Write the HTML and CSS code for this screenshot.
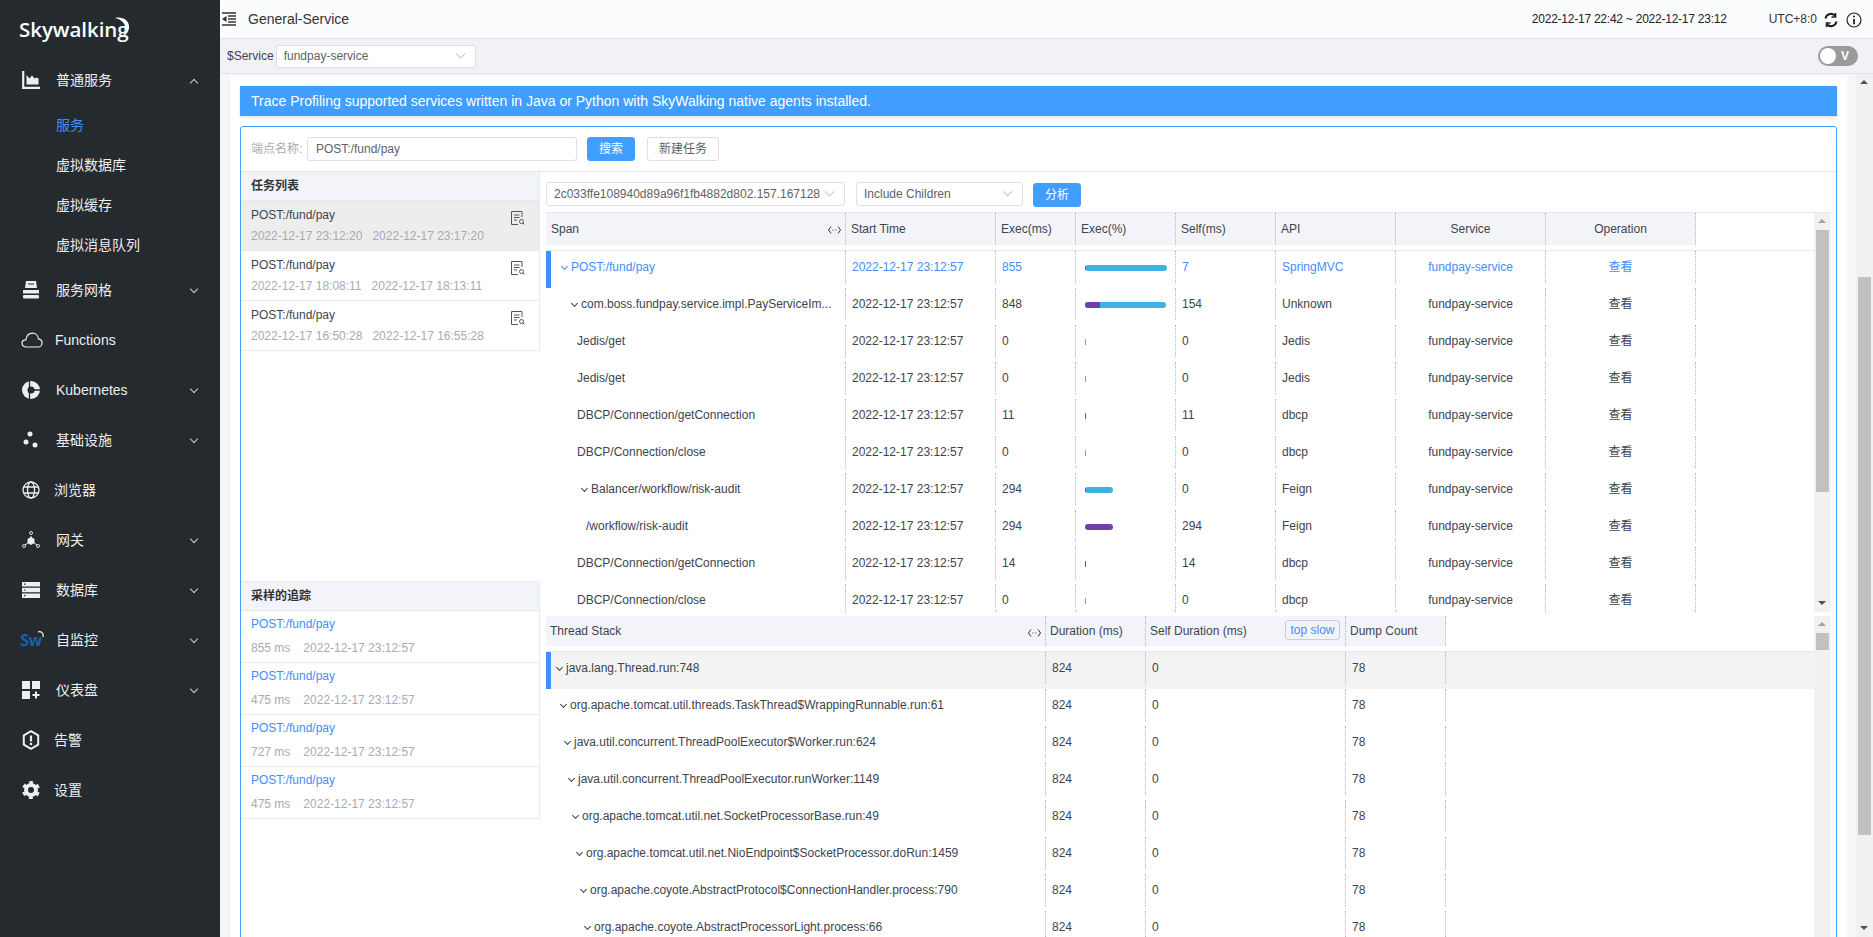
FILE: index.html
```html
<!DOCTYPE html>
<html lang="zh">
<head>
<meta charset="utf-8">
<title>General-Service</title>
<link rel="stylesheet" href="styles.css">
</head>
<body>
<div class="app">
  <aside class="side">
    <div class="logo">
      <span class="logo-text">Skywalking</span>
      <svg class="logo-moon" viewBox="0 0 18 20" width="18" height="20"><path d="M3 1c8-2 15 3 14 10-.5 4-3 7-6 8 2-3 3-6 2-10C12 5 8 2 3 1z" fill="#fff"/></svg>
    </div>
    <nav class="menu">
      <div class="mi">
        <span class="ic"><svg viewBox="0 0 18 18" width="18" height="18"><path d="M1.2 0v16.8H18" fill="none" stroke="#eee" stroke-width="2.2"/><path d="M4.5 13.5V4l3 3.500 2.500-3 2.500 3 2-1 2 1v6z" fill="#eee"/></svg></span>
        <span class="mt">普通服务</span><i class="arr up"></i>
      </div>
      <div class="sub active">服务</div>
      <div class="sub">虚拟数据库</div>
      <div class="sub">虚拟缓存</div>
      <div class="sub">虚拟消息队列</div>
      <div class="mi">
        <span class="ic"><svg viewBox="0 0 18 18" width="18" height="18"><path d="M4 0h10l1 7H3z" fill="#eee"/><path d="M6 3h6" stroke="#252a2f"/><rect x="1" y="9" width="16" height="3.500" fill="#eee"/><rect x="1" y="14" width="16" height="3.500" rx="1" fill="#eee"/></svg></span>
        <span class="mt">服务网格</span><i class="arr"></i>
      </div>
      <div class="mi">
        <span class="ic wide"><svg viewBox="0 0 22 16" width="22" height="16"><path d="M5.500 15C3 15 1 13.500 1 11.300 1 9.200 2.700 7.800 4.800 7.800 5.500 4 8 1.200 11.500 1.200c3.300 0 5.600 2.500 5.900 5.600 2 .3 3.600 2 3.600 4.100 0 2.300-1.800 4.100-4 4.100z" fill="none" stroke="#eee" stroke-width="1.200"/></svg></span>
        <span class="mt near">Functions</span>
      </div>
      <div class="mi">
        <span class="ic"><svg viewBox="0 0 18 18" width="18" height="18"><circle cx="9" cy="9" r="9" fill="#eee"/><path d="M7.500 0v18M9 9h9" stroke="#252a2f" stroke-width="1.300"/><circle cx="9" cy="9" r="3.500" fill="#252a2f"/></svg></span>
        <span class="mt">Kubernetes</span><i class="arr"></i>
      </div>
      <div class="mi">
        <span class="ic"><svg viewBox="0 0 18 18" width="18" height="18"><circle cx="8" cy="3" r="2.500" fill="#eee"/><circle cx="4" cy="11" r="2.500" fill="#eee"/><circle cx="13" cy="14" r="2.500" fill="#eee"/></svg></span>
        <span class="mt">基础设施</span><i class="arr"></i>
      </div>
      <div class="mi">
        <span class="ic"><svg viewBox="0 0 18 18" width="18" height="18" fill="none" stroke="#eee" stroke-width="1.300"><circle cx="9" cy="9" r="8"/><ellipse cx="9" cy="9" rx="3.500" ry="8"/><path d="M1.500 6h15M1.500 12h15"/></svg></span>
        <span class="mt near">浏览器</span>
      </div>
      <div class="mi">
        <span class="ic"><svg viewBox="0 0 20 18" width="20" height="18"><path d="M10 5v6M10 10l-6 4M10 10l6 4" stroke="#ddd"/><path d="M10 6l3.500 2v4L10 14l-3.500-2V8z" fill="#eee"/><circle cx="10" cy="2" r="1.500" fill="none" stroke="#ddd"/><circle cx="3" cy="15" r="1.500" fill="none" stroke="#ddd"/><circle cx="17" cy="15" r="1.500" fill="none" stroke="#ddd"/></svg></span>
        <span class="mt">网关</span><i class="arr"></i>
      </div>
      <div class="mi">
        <span class="ic"><svg viewBox="0 0 18 16" width="18" height="16"><path d="M0 0h18v4.500H0zM0 5.700h18v4.500H0zM0 11.400h18v4.500H0z" fill="#eee"/><path d="M2 2.200h1.500M2 8h1.500M2 13.600h1.500" stroke="#252a2f" stroke-width="1.200"/></svg></span>
        <span class="mt">数据库</span><i class="arr"></i>
      </div>
      <div class="mi">
        <span class="ic"><span class="sw">Sw</span><svg class="sw-arc" viewBox="0 0 6 6" width="6" height="6"><path d="M0 1c3-1 6 1 5 5" fill="none" stroke="#eee" stroke-width="1.300"/></svg></span>
        <span class="mt">自监控</span><i class="arr"></i>
      </div>
      <div class="mi">
        <span class="ic"><svg viewBox="0 0 18 18" width="18" height="18"><path d="M0 0h8v8H0zM10 0h8v8h-8zM0 10h8v8H0z" fill="#eee"/><path d="M14 10.500v7M10.500 14h7" stroke="#eee" stroke-width="2"/></svg></span>
        <span class="mt">仪表盘</span><i class="arr"></i>
      </div>
      <div class="mi">
        <span class="ic"><svg viewBox="0 0 18 20" width="18" height="20"><path d="M9 1.200l7.200 4.100v9.400L9 18.800l-7.200-4.100V5.300z" fill="none" stroke="#eee" stroke-width="2" stroke-linejoin="round"/><path d="M9 5.500v6" stroke="#eee" stroke-width="2.200"/><circle cx="9" cy="14" r="1.300" fill="#eee"/></svg></span>
        <span class="mt near">告警</span>
      </div>
      <div class="mi">
        <span class="ic"><svg viewBox="0 0 18 18" width="18" height="18" fill="none" stroke="#eee"><circle cx="9" cy="9" r="5" stroke-width="4"/><circle cx="9" cy="9" r="7.500" stroke-width="3" stroke-dasharray="3.800 4.050" stroke-dashoffset="1.900" transform="rotate(-90 9 9)"/></svg></span>
        <span class="mt near">设置</span>
      </div>
    </nav>
  </aside>

  <main class="main">
    <header class="top">
      <svg class="collapse" viewBox="0 0 14 14" width="14" height="14"><path d="M0 1h14M6 4h8M6 7h8M6 10h8M0 13h14" stroke="#333" stroke-width="1.500"/><path d="M4.500 4v6L0 7z" fill="#333"/></svg>
      <span class="page-name">General-Service</span>
      <span class="range">2022-12-17 22:42 ~ 2022-12-17 23:12</span>
      <span class="utc">UTC+8:0</span>
      <svg class="refresh" viewBox="0 0 16 16" width="16" height="16" fill="none" stroke="#222" stroke-width="2"><path d="M13.500 9.500A5.700 5.700 0 0 1 3.500 12M2.500 6.500A5.700 5.700 0 0 1 12.500 4"/><path d="M12.500 1v4h-4M3.500 15v-4h4" stroke-width="1.600"/></svg>
      <svg class="info" viewBox="0 0 16 16" width="16" height="16" fill="none" stroke="#222" stroke-width="1.200"><circle cx="8" cy="8" r="7"/><path d="M8 7v5.200" stroke-width="1.800"/><circle cx="8" cy="4.600" r="1" fill="#222" stroke="none"/></svg>
    </header>
    <div class="vars">
      <span class="var-label">$Service</span>
      <div class="select select-var"><span>fundpay-service</span><i class="dd"></i></div>
      <div class="switch"><i class="knob"></i><span>V</span></div>
    </div>
    <div class="content">
      <div class="sheet">
        <div class="banner">Trace Profiling supported services written in Java or Python with SkyWalking native agents installed.</div>
        <section class="panel">
          <div class="tools">
            <span class="tool-label">端点名称:</span>
            <div class="input">POST:/fund/pay</div>
            <button class="btn primary search">搜索</button>
            <button class="btn plain">新建任务</button>
          </div>
          <div class="panel-body">
            <div class="left">
              <div class="tasks">
                <div class="lh">任务列表</div>
                <div class="task on">
                  <div><div class="tt">POST:/fund/pay</div><div class="tm"><span>2022-12-17 23:12:20</span><span>2022-12-17 23:17:20</span></div></div>
                  <svg class="doc" viewBox="0 0 14 14" width="14" height="14" fill="none" stroke="#555"><path d="M11 6V.5H.5v13H7M3 4h5.500M3 6.500h5.500M3 9h3"/><circle cx="10.500" cy="10.500" r="2"/><path d="M12 12l1.500 1.500"/></svg>
                </div>
                <div class="task">
                  <div><div class="tt">POST:/fund/pay</div><div class="tm"><span>2022-12-17 18:08:11</span><span>2022-12-17 18:13:11</span></div></div>
                  <svg class="doc" viewBox="0 0 14 14" width="14" height="14" fill="none" stroke="#555"><path d="M11 6V.5H.5v13H7M3 4h5.500M3 6.500h5.500M3 9h3"/><circle cx="10.500" cy="10.500" r="2"/><path d="M12 12l1.500 1.500"/></svg>
                </div>
                <div class="task">
                  <div><div class="tt">POST:/fund/pay</div><div class="tm"><span>2022-12-17 16:50:28</span><span>2022-12-17 16:55:28</span></div></div>
                  <svg class="doc" viewBox="0 0 14 14" width="14" height="14" fill="none" stroke="#555"><path d="M11 6V.5H.5v13H7M3 4h5.500M3 6.500h5.500M3 9h3"/><circle cx="10.500" cy="10.500" r="2"/><path d="M12 12l1.500 1.500"/></svg>
                </div>
              </div>
              <div class="traces">
                <div class="lh">采样的追踪</div>
                <div class="trace"><div class="tl">POST:/fund/pay</div><div class="tm wide-gap"><span>855 ms</span><span>2022-12-17 23:12:57</span></div></div>
                <div class="trace"><div class="tl">POST:/fund/pay</div><div class="tm wide-gap"><span>475 ms</span><span>2022-12-17 23:12:57</span></div></div>
                <div class="trace"><div class="tl">POST:/fund/pay</div><div class="tm wide-gap"><span>727 ms</span><span>2022-12-17 23:12:57</span></div></div>
                <div class="trace"><div class="tl">POST:/fund/pay</div><div class="tm wide-gap"><span>475 ms</span><span>2022-12-17 23:12:57</span></div></div>
              </div>
            </div>
            <div class="right">
              <div class="filters">
                <div class="select select-a"><span>2c033ffe108940d89a96f1fb4882d802.157.167128</span><i class="dd"></i></div>
                <div class="select select-b"><span>Include Children</span><i class="dd"></i></div>
                <button class="btn primary analyze">分析</button>
              </div>

              <div class="pane span-pane">
                <div class="tbl">
                  <div class="thead">
                    <div class="th a1">Span<svg class="rs" viewBox="0 0 13 8" width="13" height="8" fill="none" stroke="#333"><path d="M3 .5L.5 4 3 7.500M10 .5L12.500 4 10 7.500"/><path d="M4.500 4h1M7.500 4h1"/></svg></div>
                    <div class="th a2">Start Time</div><div class="th a3">Exec(ms)</div><div class="th a4">Exec(%)</div><div class="th a5">Self(ms)</div><div class="th a6">API</div><div class="th a7 ctr">Service</div><div class="th a8 ctr">Operation</div>
                  </div>
                  <div class="tbody">
                    <div class="tr sel blue"><div class="td a1 s1"><i class="chev"></i>POST:/fund/pay</div><div class="td a2">2022-12-17 23:12:57</div><div class="td a3">855</div><div class="td a4"><div class="bar" style="width:82px"><i style="width:1px"></i></div></div><div class="td a5">7</div><div class="td a6">SpringMVC</div><div class="td a7 ctr">fundpay-service</div><div class="td a8 ctr">查看</div></div>
                    <div class="tr"><div class="td a1 s2"><i class="chev"></i>com.boss.fundpay.service.impl.PayServiceIm...</div><div class="td a2">2022-12-17 23:12:57</div><div class="td a3">848</div><div class="td a4"><div class="bar" style="width:81px"><i style="width:15px"></i></div></div><div class="td a5">154</div><div class="td a6">Unknown</div><div class="td a7 ctr">fundpay-service</div><div class="td a8 ctr">查看</div></div>
                    <div class="tr"><div class="td a1 s3">Jedis/get</div><div class="td a2">2022-12-17 23:12:57</div><div class="td a3">0</div><div class="td a4"><div class="bar" style="width:1px"></div></div><div class="td a5">0</div><div class="td a6">Jedis</div><div class="td a7 ctr">fundpay-service</div><div class="td a8 ctr">查看</div></div>
                    <div class="tr"><div class="td a1 s3">Jedis/get</div><div class="td a2">2022-12-17 23:12:57</div><div class="td a3">0</div><div class="td a4"><div class="bar" style="width:1px"></div></div><div class="td a5">0</div><div class="td a6">Jedis</div><div class="td a7 ctr">fundpay-service</div><div class="td a8 ctr">查看</div></div>
                    <div class="tr"><div class="td a1 s3">DBCP/Connection/getConnection</div><div class="td a2">2022-12-17 23:12:57</div><div class="td a3">11</div><div class="td a4"><div class="bar" style="width:1px"><i style="width:1px"></i></div></div><div class="td a5">11</div><div class="td a6">dbcp</div><div class="td a7 ctr">fundpay-service</div><div class="td a8 ctr">查看</div></div>
                    <div class="tr"><div class="td a1 s3">DBCP/Connection/close</div><div class="td a2">2022-12-17 23:12:57</div><div class="td a3">0</div><div class="td a4"><div class="bar" style="width:1px"></div></div><div class="td a5">0</div><div class="td a6">dbcp</div><div class="td a7 ctr">fundpay-service</div><div class="td a8 ctr">查看</div></div>
                    <div class="tr"><div class="td a1 s4"><i class="chev"></i>Balancer/workflow/risk-audit</div><div class="td a2">2022-12-17 23:12:57</div><div class="td a3">294</div><div class="td a4"><div class="bar" style="width:28px"><i style="width:1px"></i></div></div><div class="td a5">0</div><div class="td a6">Feign</div><div class="td a7 ctr">fundpay-service</div><div class="td a8 ctr">查看</div></div>
                    <div class="tr"><div class="td a1 s5">/workflow/risk-audit</div><div class="td a2">2022-12-17 23:12:57</div><div class="td a3">294</div><div class="td a4"><div class="bar" style="width:28px"><i style="width:28px"></i></div></div><div class="td a5">294</div><div class="td a6">Feign</div><div class="td a7 ctr">fundpay-service</div><div class="td a8 ctr">查看</div></div>
                    <div class="tr"><div class="td a1 s3">DBCP/Connection/getConnection</div><div class="td a2">2022-12-17 23:12:57</div><div class="td a3">14</div><div class="td a4"><div class="bar" style="width:1px"><i style="width:1px"></i></div></div><div class="td a5">14</div><div class="td a6">dbcp</div><div class="td a7 ctr">fundpay-service</div><div class="td a8 ctr">查看</div></div>
                    <div class="tr"><div class="td a1 s3">DBCP/Connection/close</div><div class="td a2">2022-12-17 23:12:57</div><div class="td a3">0</div><div class="td a4"><div class="bar" style="width:1px"></div></div><div class="td a5">0</div><div class="td a6">dbcp</div><div class="td a7 ctr">fundpay-service</div><div class="td a8 ctr">查看</div></div>
                  </div>
                </div>
                <div class="sbar sbar-span"><i class="ar-up dim"></i><b class="thumb"></b><i class="ar-down"></i></div>
              </div>

              <div class="pane stack-pane">
                <div class="tbl">
                  <div class="thead stack-head">
                    <div class="th b1">Thread Stack<svg class="rs" viewBox="0 0 13 8" width="13" height="8" fill="none" stroke="#333"><path d="M3 .5L.5 4 3 7.500M10 .5L12.500 4 10 7.500"/><path d="M4.500 4h1M7.500 4h1"/></svg></div>
                    <div class="th b2">Duration (ms)</div>
                    <div class="th b3">Self Duration (ms)<span class="slow">top slow</span></div>
                    <div class="th b4">Dump Count</div>
                  </div>
                  <div class="tbody">
                    <div class="tr sel grey"><div class="td b1 t1"><i class="chev"></i>java.lang.Thread.run:748</div><div class="td b2">824</div><div class="td b3">0</div><div class="td b4">78</div></div>
                    <div class="tr"><div class="td b1 t2"><i class="chev"></i>org.apache.tomcat.util.threads.TaskThread$WrappingRunnable.run:61</div><div class="td b2">824</div><div class="td b3">0</div><div class="td b4">78</div></div>
                    <div class="tr"><div class="td b1 t3"><i class="chev"></i>java.util.concurrent.ThreadPoolExecutor$Worker.run:624</div><div class="td b2">824</div><div class="td b3">0</div><div class="td b4">78</div></div>
                    <div class="tr"><div class="td b1 t4"><i class="chev"></i>java.util.concurrent.ThreadPoolExecutor.runWorker:1149</div><div class="td b2">824</div><div class="td b3">0</div><div class="td b4">78</div></div>
                    <div class="tr"><div class="td b1 t5"><i class="chev"></i>org.apache.tomcat.util.net.SocketProcessorBase.run:49</div><div class="td b2">824</div><div class="td b3">0</div><div class="td b4">78</div></div>
                    <div class="tr"><div class="td b1 t6"><i class="chev"></i>org.apache.tomcat.util.net.NioEndpoint$SocketProcessor.doRun:1459</div><div class="td b2">824</div><div class="td b3">0</div><div class="td b4">78</div></div>
                    <div class="tr"><div class="td b1 t7"><i class="chev"></i>org.apache.coyote.AbstractProtocol$ConnectionHandler.process:790</div><div class="td b2">824</div><div class="td b3">0</div><div class="td b4">78</div></div>
                    <div class="tr"><div class="td b1 t8"><i class="chev"></i>org.apache.coyote.AbstractProcessorLight.process:66</div><div class="td b2">824</div><div class="td b3">0</div><div class="td b4">78</div></div>
                  </div>
                </div>
                <div class="sbar sbar-stack"><i class="ar-up dim"></i><b class="thumb"></b></div>
              </div>
            </div>
          </div>
        </section>
      </div>
      <div class="sbar sbar-page"><i class="ar-up"></i><b class="thumb"></b><i class="ar-down"></i></div>
    </div>
  </main>
</div>
</body>
</html>
```
FILE: styles.css
```css
* { box-sizing: border-box; }
html, body { margin: 0; height: 100%; overflow: hidden; }
body {
  font: 12px/1.5 "Liberation Sans", "Noto Sans CJK SC", sans-serif;
  color: #3d444f;
}
.app { display: flex; height: 937px; }

/* sidebar */
.side { width: 220px; flex: none; background: #252a2f; color: #eee; }
.logo { height: 55px; position: relative; padding: 15px 0 0 19px; }
.logo-text {
  font: 600 20.5px/28px "Open Sans", sans-serif;
  color: #fff;
  letter-spacing: -.05px;
}
.logo-moon { position: absolute; left: 112px; top: 17px; }
.menu { display: flex; flex-direction: column; }
.mi { height: 50px; display: flex; align-items: center; padding-left: 20px; position: relative; }
.ic { width: 24px; flex: none; display: flex; justify-content: center; align-items: center; position: relative; margin-right: 12px; margin-left: -1px; }
.ic.wide { margin-left: 0; }
.mt { font-size: 14px; line-height: 20px; margin-left: 1px; }
.mt.near { margin-left: -1px; }
.arr { position: absolute; left: 191px; top: 21px; width: 6px; height: 6px; border-right: 1px solid #ccc; border-bottom: 1px solid #ccc; transform: rotate(45deg); }
.arr.up { top: 25px; transform: rotate(225deg); }
.sub { height: 40px; line-height: 40px; padding-left: 56px; font-size: 14px; }
.sub.active { color: #448dfe; }
.sw { font: 700 16px/16px "Open Sans", sans-serif; color: #1561a8; letter-spacing: -.5px; }
.sw-arc { position: absolute; right: -1px; top: -1px; }

/* main column */
.main { flex: 1; min-width: 0; display: flex; flex-direction: column; background: #f7f7f9; }
.top {
  height: 39px; flex: none; display: flex; align-items: center;
  background: #fbfcfd; border-bottom: 1px solid #e0e3e8; padding-left: 2px;
  color: #333;
}
.collapse { flex: none; }
.page-name { font-size: 14px; margin-left: 12px; color: #333; }
.range { margin-left: auto; color: #222; letter-spacing: -.24px; }
.utc { margin-left: 42px; color: #333; }
.refresh { margin: 1px 0 0 6px; }
.info { margin: 1px 11px 0 7px; }

.vars {
  height: 35px; flex: none; display: flex; align-items: center;
  background: #f0f2f5; border-bottom: 1px solid #e0e3e8; padding-left: 7px; position: relative;
}
.var-label { margin-right: 2px; color: #3d444f; }
.select {
  height: 24px; display: flex; align-items: center; justify-content: space-between;
  border: 1px solid #dcdfe6; border-radius: 3px; background: #fff; padding: 0 8px 0 7px; color: #606266;
}
.select-var { width: 200px; height: 23px; }
.dd { width: 7px; height: 7px; border-right: 1px solid #c0c4cc; border-bottom: 1px solid #c0c4cc; transform: rotate(45deg) translate(-2px, -2px); flex: none; margin-right: 3px; }
.switch {
  position: absolute; left: 1598px; top: 7px; width: 40px; height: 20px; border-radius: 10px;
  background: #9a9a9a; display: flex; align-items: center; color: #fff; font-weight: 700; padding: 0 2px;
}
.knob { width: 16px; height: 16px; border-radius: 50%; background: #fff; }
.switch span { margin-left: 5px; }

.content { flex: 1; min-height: 0; display: flex; }
.sheet {
  flex: 1; min-width: 0; margin: 2px 9px 0 10px; padding: 10px 10px 0; background: #fff;
  overflow: hidden; box-shadow: -1px 0 0 #eef0f3;
}
.banner {
  height: 30px; line-height: 30px; background: #409eff; color: #fff; font-size: 14px;
  padding-left: 11px; margin-bottom: 10px; box-shadow: 0 1px 2px rgba(0,0,0,.15);
}
.panel { border: 1px solid #409eff; border-radius: 3px; height: 900px; }
.tools { height: 45px; display: flex; align-items: center; padding-left: 10px; border-bottom: 1px solid #e4e7ed; padding-bottom: 1px; }
.tool-label { color: #a8abb2; width: 56px; flex: none; }
.input { width: 270px; height: 24px; line-height: 22px; border: 1px solid #dcdfe6; border-radius: 3px; padding-left: 8px; color: #606266; }
.btn { font: inherit; height: 24px; border-radius: 3px; padding: 0; cursor: pointer; }
.primary { background: #409eff; border: 1px solid #409eff; color: #fff; }
.plain { background: #fff; border: 1px solid #dcdfe6; color: #606266; width: 72px; margin-left: 12px; }
.search { width: 48px; margin-left: 10px; }

.panel-body { display: flex; }
.left { width: 299px; flex: none; }
.tasks { height: 409px; }
.lh { height: 29px; line-height: 28px; background: #f3f4f9; border-bottom: 1px solid #e4e7ed; border-right: 1px solid #e4e7ed; padding-left: 10px; font-weight: 700; color: #333; }
.traces .lh { border-top: 1px solid #e8eaee; height: 30px; }
.task {
  height: 50px; display: flex; justify-content: space-between; padding: 4px 14px 0 10px;
  border-bottom: 1px solid #e8eaee; border-right: 1px solid #e8eaee; background: #fff;
}
.task.on { background: #ededed; }
.tt, .tl { line-height: 20px; }
.tt { color: #3d444f; }
.tl { color: #448dfe; }
.tm { line-height: 20px; color: #a8abb2; display: flex; gap: 10px; margin-top: 1px; }
.tm.wide-gap { gap: 13px; margin-top: 4px; }
.doc { margin-top: 6px; }
.trace { height: 52px; padding: 3px 0 0 10px; border-bottom: 1px solid #e8eaee; border-right: 1px solid #e8eaee; }

.right { flex: 1; min-width: 0; padding: 0 5px 0 6px; }
.filters { height: 40px; display: flex; align-items: center; padding-top: 4px; }
.select-a { width: 299px; }
.select-b { width: 167px; margin-left: 11px; }
.analyze { width: 48px; margin-left: 10px; margin-top: 1px; }

.pane { display: flex; overflow: hidden; }
.span-pane { height: 400px; border-top: 1px solid #e4e7ed; margin-bottom: 4px; }
.stack-pane { height: 340px; }
.tbl { flex: 1; min-width: 0; }
.thead { display: flex; height: 38px; padding-bottom: 5px; border-bottom: 1px solid #e8e8e8; }
.stack-head { height: 36px; }
.th { background: #f3f4f9; line-height: 32px; padding-left: 5px; border-right: 1px dotted #b5b5b5; position: relative; }
.stack-head .th { line-height: 30px; padding-left: 4px; }
.th.ctr, .td.ctr { text-align: center; padding-left: 0; }
.rs { position: absolute; right: 4px; top: 13px; }
.slow {
  position: absolute; left: 139px; top: 4px; width: 55px; height: 20px; line-height: 18px;
  border: 1px solid #ccd0d6; border-radius: 3px; color: #448dfe; background: #f3f4f9; text-align: center;
}
.a1, .b1 { width: 300px; flex: none; }
.a2 { width: 150px; flex: none; }
.a3 { width: 80px; flex: none; }
.a4, .a5 { width: 100px; flex: none; }
.a6 { width: 120px; flex: none; }
.a7, .a8 { width: 150px; flex: none; }
.b1 { width: 500px; }
.b2 { width: 100px; flex: none; }
.b3 { width: 200px; flex: none; }
.b4 { width: 100px; flex: none; }

.tr { display: flex; height: 37px; position: relative; align-items: flex-start; }
.td {
  height: 32px; line-height: 32px; padding-left: 6px; border-right: 1px dotted #b5b5b5;
  white-space: nowrap; display: flex; align-items: center;
}
.td.ctr { justify-content: center; }
.tr.sel::before { content: ""; position: absolute; left: 0; top: 0; bottom: 0; width: 5px; background: #448dfe; }
.tr.grey { background: #f3f3f3; }
.tr.blue { color: #448dfe; }
.chev { width: 11px; height: 10px; flex: none; position: relative; margin-top: 3px; }
.chev::before {
  content: ""; position: absolute; left: 1.500px; top: 0; width: 4px; height: 4px;
  border-right: 1.500px solid currentColor; border-bottom: 1.500px solid currentColor; transform: rotate(45deg);
}
.td.s1 { padding-left: 14px; }
.td.s2 { padding-left: 24px; }
.td.s3 { padding-left: 31px; }
.td.s4 { padding-left: 34px; }
.td.s5 { padding-left: 40px; }
.td.t1 { padding-left: 9px; }
.td.t2 { padding-left: 13px; }
.td.t3 { padding-left: 17px; }
.td.t4 { padding-left: 21px; }
.td.t5 { padding-left: 25px; }
.td.t6 { padding-left: 29px; }
.td.t7 { padding-left: 33px; }
.td.t8 { padding-left: 37px; }
.td.a4 { padding-left: 9px; }
.bar { height: 6px; border-radius: 3px; background: #3fb1e3; overflow: hidden; margin-top: 1px; }
.bar i { display: block; height: 6px; background: #6f3fae; }

/* scrollbars */
.sbar { width: 17px; flex: none; background: #f1f1f1; display: flex; flex-direction: column; align-items: center; position: relative; }
.sbar-span { height: 399px; }
.sbar-stack { height: 340px; }
.sbar-page { height: 863px; margin-top: 0; }
.thumb { width: 13px; background: #c1c1c1; display: block; }
.sbar-span .thumb { height: 262px; }
.sbar-stack .thumb { height: 17px; }
.sbar-page .thumb { height: 558px; margin-top: 186px; }
.ar-up, .ar-down { height: 17px; width: 17px; flex: none; position: relative; }
.ar-down { margin-top: auto; }
.ar-up::before, .ar-down::before {
  content: ""; position: absolute; left: 4px; top: 6px; border: 4.500px solid transparent; border-top: 0; border-bottom: 4.500px solid #505050;
}
.ar-down::before { border-bottom: 0; border-top: 4.500px solid #505050; }
.ar-up.dim::before { border-bottom-color: #a3a3a3; }
```
